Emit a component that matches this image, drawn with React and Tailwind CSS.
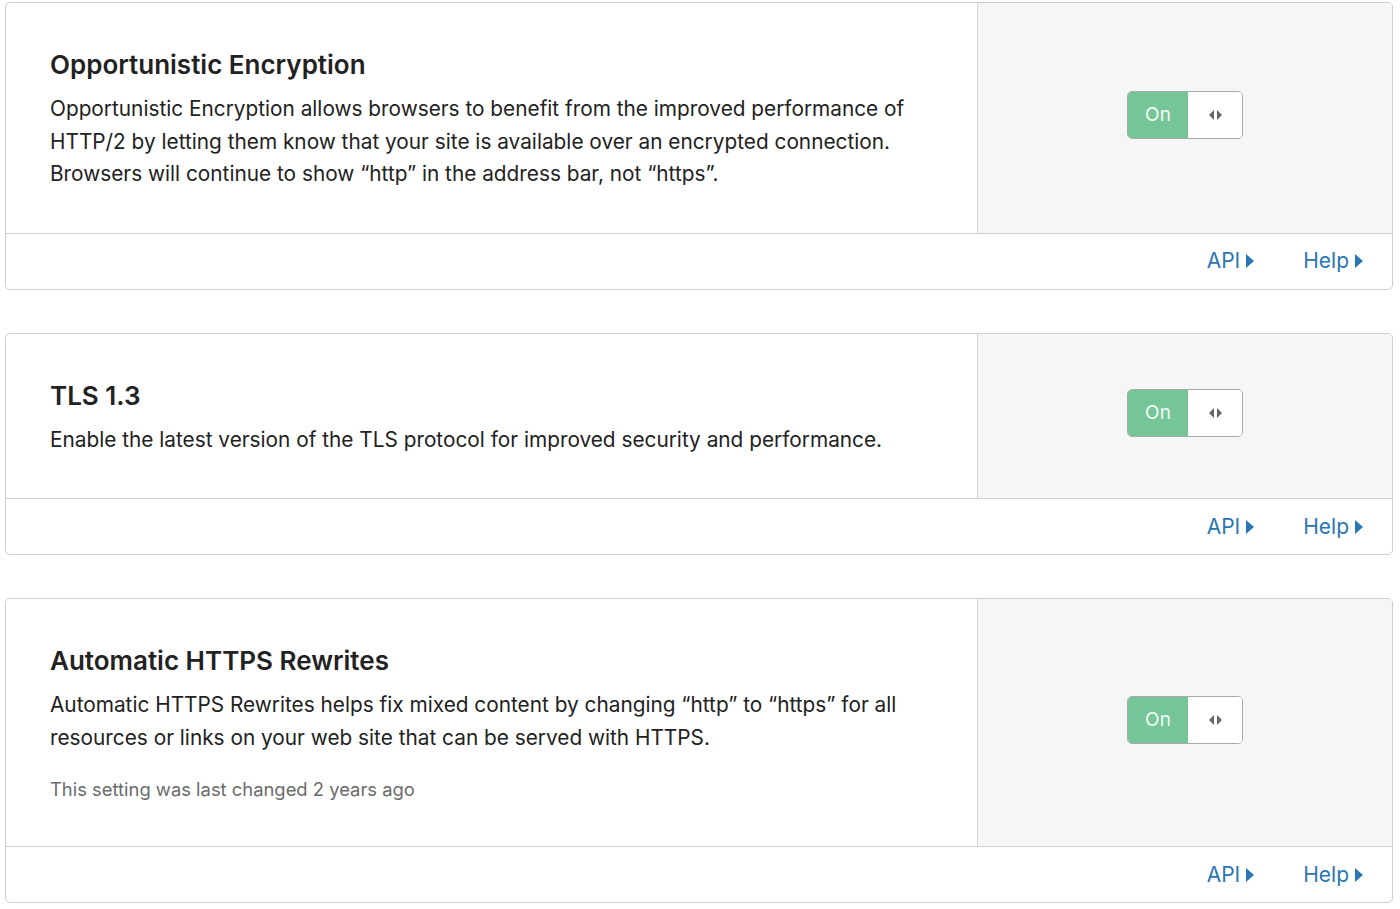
import React from "react";

const settings = [
  {
    title: "Opportunistic Encryption",
    body: "Opportunistic Encryption allows browsers to benefit from the improved performance of HTTP/2 by letting them know that your site is available over an encrypted connection. Browsers will continue to show \u201Chttp\u201D in the address bar, not \u201Chttps\u201D.",
  },
  {
    title: "TLS 1.3",
    body: "Enable the latest version of the TLS protocol for improved security and performance.",
  },
  {
    title: "Automatic HTTPS Rewrites",
    body: "Automatic HTTPS Rewrites helps fix mixed content by changing \u201Chttp\u201D to \u201Chttps\u201D for all resources or links on your web site that can be served with HTTPS.",
    note: "This setting was last changed 2 years ago",
  },
];

const Caret = () => (
  <svg width="8" height="14" viewBox="0 0 8 14" className="ml-[6px] inline-block">
    <path d="M0 0 L8 7 L0 14 Z" fill="currentColor" />
  </svg>
);

const Toggle = () => (
  <div className="flex h-[48px] w-[116px] overflow-hidden rounded-[5px] border border-[#a9a9a9] bg-white">
    <div className="flex w-[60px] items-center justify-center bg-[#76c599] text-[19px] text-[#f1faf4]">
      On
    </div>
    <div className="flex flex-1 items-center justify-center gap-[3px] rounded-l-[5px] bg-white">
      <svg width="5" height="10" viewBox="0 0 5 10">
        <path d="M5 0 L0 5 L5 10 Z" fill="#666" />
      </svg>
      <svg width="5" height="10" viewBox="0 0 5 10">
        <path d="M0 0 L5 5 L0 10 Z" fill="#666" />
      </svg>
    </div>
  </div>
);

const SettingCard = ({ title, body, note }) => (
  <div className="overflow-hidden rounded-[5px] border border-[#cfcfcf] bg-white">
    <div className="flex">
      <div className="w-[971px] shrink-0 px-[44px] pt-[44px] pb-[42px]">
        <h3 className="text-[26px] font-semibold leading-[36px] text-[#222]">{title}</h3>
        <p className="mt-[10px] max-w-[880px] text-[20.8px] leading-[32.5px] text-[#222]">{body}</p>
        {note && (
          <p className="mt-[21px] text-[18.4px] leading-[29px] text-[#6b6b6b]">{note}</p>
        )}
      </div>
      <div className="flex flex-1 items-center justify-center border-l border-[#d4d4d4] bg-[#f5f6f6] pb-[5px]">
        <Toggle />
      </div>
    </div>
    <div className="flex h-[56px] items-center justify-end gap-[49px] border-t border-[#cfcfcf] pr-[29px] text-[21px] text-[#2a76b2]">
      <a className="flex items-center">
        API
        <Caret />
      </a>
      <a className="flex items-center">
        Help
        <Caret />
      </a>
    </div>
  </div>
);

export default function App() {
  return (
    <div
      className="flex min-h-screen flex-col gap-[43px] bg-white pl-[5px] pr-[7px] pt-[2px]"
      style={{ fontFamily: "Inter, 'Noto Sans', sans-serif" }}
    >
      {settings.map((s) => (
        <SettingCard key={s.title} {...s} />
      ))}
    </div>
  );
}
